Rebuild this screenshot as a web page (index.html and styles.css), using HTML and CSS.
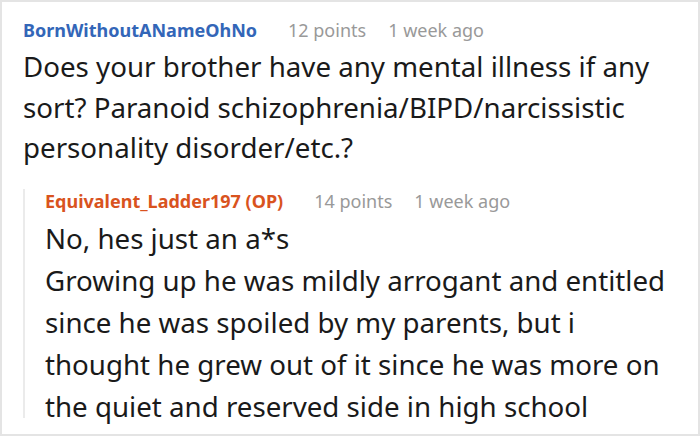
FILE: index.html
```html
<!DOCTYPE html>
<html>
<head>
<meta charset="utf-8">
<link rel="stylesheet" href="styles.css">
</head>
<body>
<div class="frame">
  <div class="comment">
    <div class="head">
      <span class="user">BornWithoutANameOhNo</span>
      <span class="meta">12 points</span>
      <span class="meta">1 week ago</span>
    </div>
    <div class="body">Does your brother have any mental illness if any sort? Paranoid schizophrenia/BIPD/narcissistic personality disorder/etc.?</div>
    <div class="reply">
      <div class="head">
        <span class="user op">Equivalent_Ladder197 (OP)</span>
        <span class="meta">14 points</span>
        <span class="meta">1 week ago</span>
      </div>
      <div class="body">No, hes just an a*s<br>Growing up he was mildly arrogant and entitled since he was spoiled by my parents, but i thought he grew out of it since he was more on the quiet and reserved side in high school</div>
    </div>
  </div>
</div>
</body>
</html>
```

FILE: styles.css
```css
html, body {
  margin: 0;
  padding: 0;
  background: #fff;
}
.frame {
  width: 700px;
  height: 436px;
  box-sizing: border-box;
  border: 2px solid #e4e4e4;
  padding: 16px 20px 0 21px;
  overflow: hidden;
  font-family: "Noto Sans", sans-serif;
  color: #1a1a1a;
}
.head {
  display: flex;
  align-items: baseline;
  font-size: 18px;
  line-height: 24px;
}
.user {
  font-weight: 700;
  color: #3366b8;
  margin-right: 31px;
}
.user.op {
  color: #d9531e;
}
.meta {
  color: #999;
  margin-right: 22px;
}
.body {
  font-size: 27.7px;
  line-height: 40.5px;
  margin-top: 4px;
}
.reply {
  margin-top: 21px;
  border-left: 2px solid #ebebeb;
  padding-left: 20px;
  height: 229px;
}
.reply .body {
  line-height: 42.2px;
  margin-top: 4px;
}
```
